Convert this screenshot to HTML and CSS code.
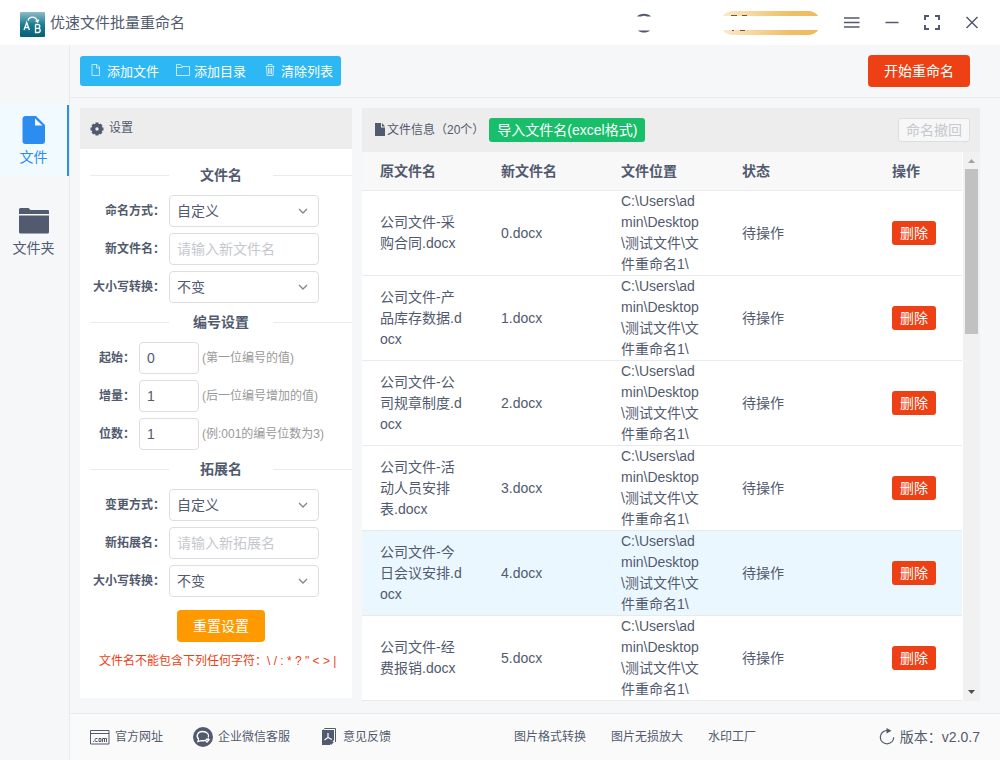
FILE: index.html
```html
<!DOCTYPE html>
<html lang="zh-CN">
<head>
    <meta charset="UTF-8">
    <meta name="viewport" content="width=device-width, initial-scale=1.0">
    <title>优速文件批量重命名</title>
    <link rel="stylesheet" href="styles.css">
</head>
<body>
    <header class="titlebar">
        <svg class="logo" width="25" height="25" viewBox="0 0 25 25">
            <defs>
                <linearGradient id="logoBg" x1="0" y1="0" x2="0" y2="1">
                    <stop offset="0" stop-color="#8dbdc8"/>
                    <stop offset="0.5" stop-color="#1d7c91"/>
                    <stop offset="1" stop-color="#066178"/>
                </linearGradient>
            </defs>
            <rect width="25" height="25" rx="1" fill="url(#logoBg)"/>
            <g fill="none" stroke="#fff" stroke-width="1.3">
                <path d="M4 18L6.7 10.5L9.4 18M5 15.500h3.500"/>
                <path d="M15.500 12.500v8h2.600a2.100 2.100 0 0 0 0-4.200h-2.600m2.400 0a1.900 1.900 0 0 0 0-3.800h-2.400"/>
                <path d="M8 8.500C9.500 4 15.500 4 17.500 9M15.500 8.700l2.200 1.300l1-2.400"/>
            </g>
        </svg>
        <h1 class="app-title">优速文件批量重命名</h1>
        <svg class="avatar" width="16" height="20" viewBox="0 0 16 20" fill="#50586e">
            <path d="M1 3.500C4-.3 12-.3 15 3.500h-4Q8 2 5 3.500zM2 17.500h12c-3 2.700-9 2.700-12 0z"/>
        </svg>
        <svg class="vip" width="98" height="24" viewBox="0 0 98 24">
            <defs>
                <linearGradient id="gold">
                    <stop offset="0" stop-color="#fbe9cd"/>
                    <stop offset="0.7" stop-color="#efc064"/>
                    <stop offset="1" stop-color="#efba5b"/>
                </linearGradient>
            </defs>
            <path d="M1 5C3 1.500 7 0 11 0h75c4 0 8 1.500 10 5zM1 19h95c-2 3.500-6 5-10 5H11c-4 0-8-1.500-10-5z" fill="url(#gold)"/>
            <path d="M9 4.500h6M20 4.500h5M10 19.500h2M18 19.500h5" stroke="#7b5230"/>
        </svg>
        <div class="window-buttons">
            <button class="window-btn" aria-label="菜单">
                <svg width="16" height="16" viewBox="0 0 16 16"><path d="M0 3h15.500M0 7.500h15.500M0 12h15.500"/></svg>
            </button>
            <button class="window-btn" aria-label="最小化">
                <svg width="16" height="16" viewBox="0 0 16 16"><path d="M1.500 7.500h13"/></svg>
            </button>
            <button class="window-btn" aria-label="最大化">
                <svg width="16" height="16" viewBox="0 0 16 16"><path class="thick" d="M1 5V1h4M11 1h4v4M15 10v4h-4M5 14H1v-4"/></svg>
            </button>
            <button class="window-btn" aria-label="关闭">
                <svg width="16" height="16" viewBox="0 0 16 16"><path d="M2.500 2l11 11M13.500 2l-11 11"/></svg>
            </button>
        </div>
    </header>

    <div class="layout">
        <nav class="sidebar">
            <a class="side-item active" href="#">
                <svg width="24" height="30" viewBox="0 0 24 30"><path fill="currentColor" d="M3 1h11l9 9v16a3 3 0 0 1-3 3H3.500a3 3 0 0 1-3-3V4A3 3 0 0 1 3 1z"/><path fill="#f0f9ff" d="M13 3.500v7h7.500z"/></svg>
                <span>文件</span>
            </a>
            <a class="side-item" href="#">
                <svg width="32" height="30" viewBox="0 0 32 30" fill="currentColor"><path d="M1 3.500Q1 2 2.500 2h8l2 2H30q1 0 1 1v3H1z"/><path d="M1 9.500h30V26q0 1.500-1.500 1.500h-27Q1 27.500 1 26z"/></svg>
                <span>文件夹</span>
            </a>
        </nav>

        <div class="main">
            <div class="toolbar">
                <div class="btn-group">
                    <button class="tool-btn">
                        <svg width="14" height="14" viewBox="0 0 14 14"><path d="M3 1.500h5l2.500 2.500v8.500H3zM7.500 1.500V5h3"/></svg>添加文件
                    </button>
                    <button class="tool-btn">
                        <svg width="14" height="14" viewBox="0 0 14 14"><path d="M.5 12.500v-11h4l1.500 2h7.500v9zM.5 4.500h6"/></svg>添加目录
                    </button>
                    <button class="tool-btn">
                        <svg width="14" height="14" viewBox="0 0 14 14"><path d="M2.500 3.500h9M5 3V1.500h4V3M3.500 4l.5 8.500h6l.5-8.500M5.500 5v6M7 5v6M8.500 5v6"/></svg>清除列表
                    </button>
                </div>
                <button class="btn btn-start">开始重命名</button>
            </div>

            <div class="content">
                <section class="panel settings">
                    <div class="panel-head">
                        <svg width="14" height="14" viewBox="0 0 14 14"><circle cx="7" cy="7" r="3.600" fill="none" stroke="currentColor" stroke-width="3.800"/><path d="M7 .5v3M7 10.500v3M.5 7h3M10.500 7h3M2.500 2.500l2 2M9.500 9.500l2 2M11.500 2.500l-2 2M2.500 11.500l2-2" stroke="currentColor" stroke-width="3"/></svg>
                        设置
                    </div>
                    <form class="settings-form">
                        <h2 class="section-title">文件名</h2>
                        <div class="fields">
                            <div class="field">
                                <label for="nameMode">命名方式：</label>
                                <div class="select-box">
                                    <select id="nameMode"><option>自定义</option></select>
                                    <svg width="10" height="10" viewBox="0 0 10 10"><path d="M1 3l4 4l4-4"/></svg>
                                </div>
                            </div>
                            <div class="field">
                                <label for="newName">新文件名：</label>
                                <input class="text-input" id="newName" type="text" placeholder="请输入新文件名">
                            </div>
                            <div class="field">
                                <label for="nameCase">大小写转换：</label>
                                <div class="select-box">
                                    <select id="nameCase"><option>不变</option></select>
                                    <svg width="10" height="10" viewBox="0 0 10 10"><path d="M1 3l4 4l4-4"/></svg>
                                </div>
                            </div>
                        </div>

                        <h2 class="section-title">编号设置</h2>
                        <div class="fields">
                            <div class="field number">
                                <label for="numStart">起始：</label>
                                <input class="text-input" id="numStart" type="text" value="0">
                                <span class="note">(第一位编号的值)</span>
                            </div>
                            <div class="field number">
                                <label for="numStep">增量：</label>
                                <input class="text-input" id="numStep" type="text" value="1">
                                <span class="note">(后一位编号增加的值)</span>
                            </div>
                            <div class="field number">
                                <label for="numDigits">位数：</label>
                                <input class="text-input" id="numDigits" type="text" value="1">
                                <span class="note">(例:001的编号位数为3)</span>
                            </div>
                        </div>

                        <h2 class="section-title">拓展名</h2>
                        <div class="fields">
                            <div class="field">
                                <label for="extMode">变更方式：</label>
                                <div class="select-box">
                                    <select id="extMode"><option>自定义</option></select>
                                    <svg width="10" height="10" viewBox="0 0 10 10"><path d="M1 3l4 4l4-4"/></svg>
                                </div>
                            </div>
                            <div class="field">
                                <label for="newExt">新拓展名：</label>
                                <input class="text-input" id="newExt" type="text" placeholder="请输入新拓展名">
                            </div>
                            <div class="field">
                                <label for="extCase">大小写转换：</label>
                                <div class="select-box">
                                    <select id="extCase"><option>不变</option></select>
                                    <svg width="10" height="10" viewBox="0 0 10 10"><path d="M1 3l4 4l4-4"/></svg>
                                </div>
                            </div>
                        </div>
                        <button class="btn btn-reset" type="reset">重置设置</button>
                        <p class="warning">文件名不能包含下列任何字符：\ / : * ? " &lt; &gt; |</p>
                    </form>
                </section>

                <section class="panel files">
                    <div class="files-head">
                        <svg width="10" height="14" viewBox="0 0 10 14"><path fill="currentColor" d="M0 0h6v4.500h4V13H0zM7 0l3 3.500H7z"/></svg>
                        <span>文件信息（20个）</span>
                        <button class="btn-small btn-import">导入文件名(excel格式)</button>
                        <button class="btn-small btn-undo" disabled>命名撤回</button>
                    </div>
                    <div class="files-body">
                        <table class="file-table">
                            <colgroup>
                                <col class="col-old"><col class="col-new"><col class="col-path"><col class="col-state"><col class="col-action">
                            </colgroup>
                            <thead>
                                <tr><th>原文件名</th><th>新文件名</th><th>文件位置</th><th>状态</th><th>操作</th></tr>
                            </thead>
                            <tbody>
                                <tr>
                                    <td>公司文件-采购合同.docx</td><td>0.docx</td><td>C:\Users\admin\Desktop\测试文件\文件重命名1\</td><td>待操作</td>
                                    <td><button class="btn-small btn-delete">删除</button></td>
                                </tr>
                                <tr>
                                    <td>公司文件-产品库存数据.docx</td><td>1.docx</td><td>C:\Users\admin\Desktop\测试文件\文件重命名1\</td><td>待操作</td>
                                    <td><button class="btn-small btn-delete">删除</button></td>
                                </tr>
                                <tr>
                                    <td>公司文件-公司规章制度.docx</td><td>2.docx</td><td>C:\Users\admin\Desktop\测试文件\文件重命名1\</td><td>待操作</td>
                                    <td><button class="btn-small btn-delete">删除</button></td>
                                </tr>
                                <tr>
                                    <td>公司文件-活动人员安排表.docx</td><td>3.docx</td><td>C:\Users\admin\Desktop\测试文件\文件重命名1\</td><td>待操作</td>
                                    <td><button class="btn-small btn-delete">删除</button></td>
                                </tr>
                                <tr class="hover">
                                    <td>公司文件-今日会议安排.docx</td><td>4.docx</td><td>C:\Users\admin\Desktop\测试文件\文件重命名1\</td><td>待操作</td>
                                    <td><button class="btn-small btn-delete">删除</button></td>
                                </tr>
                                <tr>
                                    <td>公司文件-经费报销.docx</td><td>5.docx</td><td>C:\Users\admin\Desktop\测试文件\文件重命名1\</td><td>待操作</td>
                                    <td><button class="btn-small btn-delete">删除</button></td>
                                </tr>
                            </tbody>
                        </table>
                        <div class="scrollbar">
                            <svg class="arrow-up" width="17" height="17" viewBox="0 0 17 17"><path d="M5 11h7L8.500 7z"/></svg>
                            <div class="thumb"></div>
                            <svg class="arrow-down" width="17" height="17" viewBox="0 0 17 17"><path d="M5 6h7l-3.500 4z"/></svg>
                        </div>
                    </div>
                </section>
            </div>

            <footer class="footer">
                <div class="contact">
                    <a href="#">
                        <svg width="20" height="20" viewBox="0 0 20 20" fill="none" stroke="currentColor"><path d="M.5 3.500h18.500v13.500H.5zM.5 6.500h18.500"/><path d="M3 14.500h1M7.500 11.500H6q-1 0-1 1v1q0 1 1 1h1.500M9 11.500h2v3H9zM12.500 15v-3.500h4V15M14.500 11.500V15"/></svg>
                        官方网址
                    </a>
                    <a href="#">
                        <svg width="20" height="20" viewBox="0 0 20 20"><circle cx="10" cy="10" r="10" fill="currentColor"/><g fill="none" stroke="#fff" stroke-width="1.300"><path d="M12 13.300c-1 .4-2.500.6-4 .3L5 14.500l.5-2.400C2.500 8.700 5 4.500 9.500 4.500s7 3 5.800 6"/><path d="M12.500 13.500l1.500-1.500l1.500 1.500l-1.500 1.500zM15 11.500l1.500 1.500"/></g></svg>
                        企业微信客服
                    </a>
                    <a href="#">
                        <svg width="18" height="20" viewBox="0 0 18 20"><path fill="currentColor" d="M2 3h12v10l-4 5H2zM11 18v-3h3z"/><path d="M3.500 2.500L4.500 1.500h11V15" fill="none" stroke="currentColor"/><path d="M8 6v4.500L4.500 13M8 10.500l4 2" fill="none" stroke="#fff" stroke-width="1.200"/></svg>
                        意见反馈
                    </a>
                </div>
                <div class="links">
                    <a href="#">图片格式转换</a>
                    <a href="#">图片无损放大</a>
                    <a href="#">水印工厂</a>
                </div>
                <div class="version">
                    <svg width="16" height="18" viewBox="0 0 16 18"><path d="M8 2.500a6.700 6.700 0 1 0 6.700 6.700" fill="none" stroke="currentColor" stroke-width="1.200"/><path d="M7.500 0l5 2.800l-5 2.800z" fill="currentColor"/></svg>
                    版本：v2.0.7
                </div>
            </footer>
        </div>
    </div>
</body>
</html>
```
FILE: styles.css
```css
* {
    margin: 0;
    padding: 0;
    box-sizing: border-box;
}
body {
    display: flex;
    flex-direction: column;
    min-height: 100vh;
    font-family: "Liberation Sans", "Noto Sans CJK SC", sans-serif;
    font-size: 14px;
    line-height: 21px;
    color: #515a6e;
    background-color: #f5f7f9;
}
button, input, select {
    font-family: inherit;
    font-size: 14px;
    color: inherit;
}
button {
    border: none;
    cursor: pointer;
}
a {
    color: inherit;
    text-decoration: none;
}
svg {
    flex-shrink: 0;
}

/* 标题栏 */
.titlebar {
    display: flex;
    align-items: center;
    height: 45px;
    padding: 0 8px 0 20px;
    background-color: #fff;
}
.logo {
    margin-top: 3px;
}
.app-title {
    margin-left: 5px;
    font-size: 15px;
    font-weight: normal;
}
.avatar {
    margin-left: auto;
}
.vip {
    margin: 0 12px 0 70px;
}
.window-buttons {
    display: flex;
}
.window-btn {
    display: flex;
    align-items: center;
    justify-content: center;
    width: 40px;
    height: 42px;
    background: none;
}
.window-btn path {
    fill: none;
    stroke: #515a6e;
    stroke-width: 1.5;
}
.window-btn .thick {
    stroke-width: 2;
}

/* 左侧导航 */
.layout {
    display: flex;
    flex: 1;
}
.sidebar {
    display: flex;
    flex-direction: column;
    gap: 20px;
    width: 70px;
    padding-top: 60px;
    border-right: 1px solid #e8eaec;
}
.side-item {
    display: flex;
    flex-direction: column;
    align-items: center;
    height: 71px;
    padding-top: 10px;
    border-right: 2px solid transparent;
}
.side-item span {
    margin-top: 2px;
    white-space: nowrap;
}
.side-item.active {
    color: #2d8cf0;
    background-color: #f0faff;
    border-right-color: #2d8cf0;
}

.main {
    display: flex;
    flex-direction: column;
    flex: 1;
    min-width: 0;
}
.toolbar {
    display: flex;
    align-items: center;
    justify-content: space-between;
    height: 53px;
    padding: 0 30px 0 10px;
    border-bottom: 1px solid #e8eaec;
}
.btn-group {
    display: flex;
    height: 30px;
    background-color: #2db7f5;
    border-radius: 3px;
}
.tool-btn {
    display: flex;
    align-items: center;
    gap: 4px;
    padding: 0 8px 2px 9px;
    background: none;
    color: #fff;
    font-size: 13px;
}
.tool-btn path {
    fill: none;
    stroke: #c4e9fc;
}
.btn {
    height: 32px;
    padding: 0 16px 2px;
    border-radius: 4px;
    color: #fff;
}
.btn-start {
    background-color: #ed4014;
}

/* 设置面板 */
.content {
    display: flex;
    flex: 1;
    align-items: flex-start;
    gap: 10px;
    padding: 10px 20px 10px 10px;
}
.panel {
    background-color: #fff;
}
.settings {
    width: 272px;
    flex-shrink: 0;
}
.panel-head {
    display: flex;
    align-items: center;
    gap: 5px;
    height: 41px;
    padding: 0 10px;
    font-size: 12px;
    background-color: #ededed;
}
.settings-form {
    display: flex;
    flex-direction: column;
    padding: 7px 0 26px 10px;
}
.section-title {
    display: grid;
    grid-template-columns: 1fr 104px 1fr;
    align-items: center;
    height: 39px;
    font-size: 14px;
    text-align: center;
}
.section-title::before,
.section-title::after {
    content: "";
    height: 1px;
    background-color: #e8eaec;
}
.fields {
    display: flex;
    flex-direction: column;
    gap: 6px;
}
.field {
    display: flex;
    align-items: center;
    height: 32px;
}
.field label {
    width: 79px;
    padding-right: 4px;
    font-size: 12px;
    font-weight: bold;
    text-align: right;
    white-space: nowrap;
}
.field.number label {
    width: 49px;
}
.text-input,
.select-box select {
    width: 150px;
    height: 32px;
    padding: 0 7px;
    border: 1px solid #dcdee2;
    border-radius: 4px;
    background-color: #fff;
    outline: none;
}
.text-input::placeholder {
    color: #c5c8ce;
}
.field.number .text-input {
    width: 60px;
}
.select-box {
    display: grid;
    align-items: center;
}
.select-box select {
    grid-area: 1 / 1;
    appearance: none;
}
.select-box svg {
    grid-area: 1 / 1;
    justify-self: end;
    margin-right: 11px;
    pointer-events: none;
}
.select-box path {
    fill: none;
    stroke: #808695;
    stroke-width: 1.3;
}
.note {
    margin-left: 3px;
    font-size: 12px;
    color: #999;
    white-space: nowrap;
}
.btn-reset {
    align-self: center;
    margin-top: 13px;
    background-color: #f90;
}
.warning {
    margin-top: 9px;
    padding-left: 9px;
    font-size: 12px;
    color: #ed4014;
    white-space: nowrap;
}

/* 文件列表 */
.files {
    flex: 1;
    min-width: 0;
}
.files-head {
    display: flex;
    align-items: center;
    height: 44px;
    padding: 0 10px 0 13px;
    font-size: 12px;
    background-color: #ededed;
}
.files-head span {
    margin: 0 5px 0 2px;
}
.btn-small {
    height: 24px;
    padding: 0 7px 2px;
    border: 1px solid transparent;
    border-radius: 3px;
    color: #fff;
    font-size: 14px;
    white-space: nowrap;
}
.btn-import {
    background-color: #19be6b;
}
.btn-undo {
    margin-left: auto;
    background-color: #f7f7f7;
    border-color: #dcdee2;
    color: #c5c8ce;
    cursor: not-allowed;
}
.btn-delete {
    background-color: #ed4014;
}
.files-body {
    display: flex;
    gap: 1px;
}
.file-table {
    flex: 1;
    table-layout: fixed;
    border-collapse: separate;
    border-spacing: 0;
}
.col-old, .col-path {
    width: 121px;
}
.col-new {
    width: 120px;
}
.col-state {
    width: 150px;
}
.file-table th {
    height: 39px;
    padding: 0 18px;
    text-align: left;
    background-color: #f8f8f9;
    border-bottom: 1px solid #e8eaec;
}
.file-table td {
    height: 85px;
    padding: 0 18px;
    vertical-align: middle;
    word-break: break-all;
    border-bottom: 1px solid #e8eaec;
}
.file-table .hover td {
    background-color: #ebf7ff;
}
.scrollbar {
    display: flex;
    flex-direction: column;
    width: 17px;
    background-color: #f1f1f1;
}
.thumb {
    height: 30%;
    margin: 0 2px;
    background-color: #c1c1c1;
}
.arrow-up {
    fill: #a3a3a3;
}
.arrow-down {
    margin-top: auto;
    fill: #505050;
}

/* 底部 */
.footer {
    display: flex;
    align-items: center;
    justify-content: space-between;
    height: 47px;
    padding: 0 20px;
    font-size: 12px;
    background-color: #fafafa;
    border-top: 1px solid #e8eaec;
}
.contact {
    display: flex;
    gap: 30px;
}
.contact a {
    display: flex;
    align-items: center;
    gap: 5px;
}
.links {
    display: flex;
    gap: 25px;
}
.version {
    display: flex;
    align-items: center;
    gap: 5px;
    font-size: 14px;
}
```
